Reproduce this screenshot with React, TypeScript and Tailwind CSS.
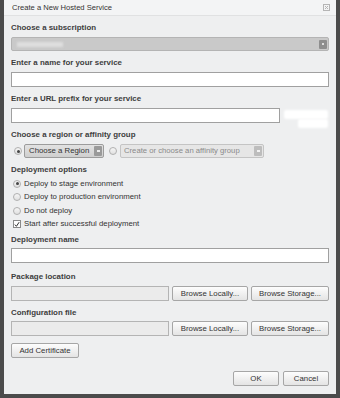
const FONT = { fontFamily: '"Liberation Sans", Arial, sans-serif' };

function Label({ children, className = '' }: { children: React.ReactNode; className?: string }) {
  return <div className={`h-[12px] leading-[12px] text-[7.9px] font-bold text-[#3d3d3d] ${className}`}>{children}</div>;
}

function Radio({ checked = false }: { checked?: boolean }) {
  return (
    <span className="w-[8px] h-[8px] rounded-full border border-[#b0b0b0] bg-gradient-to-b from-[#f6f6f6] to-[#e0e0e0] flex items-center justify-center shrink-0">
      {checked && <span className="w-[3px] h-[3px] rounded-full bg-[#444]" />}
    </span>
  );
}

function Checkbox() {
  return (
    <span className="w-[8px] h-[8px] border border-[#8a8a8a] bg-white flex items-center justify-center shrink-0">
      <svg width="7" height="7" viewBox="0 0 7 7">
        <path d="M1 3.6 L2.8 5.6 L6 0.8" fill="none" stroke="#222" strokeWidth="1.1" />
      </svg>
    </span>
  );
}

function Button({ children, className = '' }: { children: React.ReactNode; className?: string }) {
  return (
    <div className={`h-[15px] shrink-0 flex items-center justify-center rounded-[2px] border border-[#a6a6a6] bg-gradient-to-b from-[#fdfdfd] to-[#e4e4e4] text-[7.8px] text-[#333] ${className}`}>
      {children}
    </div>
  );
}

export default function App() {
  return (
    <div className="w-[340px] h-[398px] bg-[#4b4b4b] px-[4px] pb-[4px] overflow-hidden" style={FONT}>
      <div className="h-full bg-[#eeeff0] flex flex-col">
        {/* title bar */}
        <div className="h-[16px] bg-[#f3f4f5] border-b border-[#e0e1e2] flex items-center justify-between pl-[8px] pr-[6px]">
          <span className="text-[7.6px] text-[#333]">Create a New Hosted Service</span>
          <svg width="7" height="7" viewBox="0 0 7 7">
            <rect x="0.5" y="0.5" width="6" height="6" fill="none" stroke="#b5b5b5" />
            <path d="M2 2 L5 5 M5 2 L2 5" stroke="#b5b5b5" />
          </svg>
        </div>

        <div className="flex flex-col px-[7px]">
          <Label className="mt-[6px]">Choose a subscription</Label>
          <div className="mt-[3px] h-[14px] rounded-[2px] border border-[#b4b4b4] bg-[#c9c9c9] flex items-center justify-between pl-[5px] pr-[1px]">
            <span className="w-[46px] h-[5px] bg-[#dedede] blur-[1px]" />
            <span className="w-[8px] h-[9px] rounded-[1px] bg-[#8e8e8e] flex items-center justify-center">
              <span className="w-[2px] h-[2px] bg-white/70" />
            </span>
          </div>

          <Label className="mt-[6px]">Enter a name for your service</Label>
          <div className="mt-[3px] h-[15px] border border-[#a0a0a0] bg-white" />

          <Label className="mt-[6px]">Enter a URL prefix for your service</Label>
          <div className="mt-[3px] h-[15px] flex items-start">
            <div className="w-[269px] h-[15px] shrink-0 border border-[#a0a0a0] bg-white" />
            {/* blurred-out suffix */}
            <div className="ml-[4px] flex flex-col">
              <div className="mt-[2px] w-[44px] h-[9px] bg-white rounded-[2px] blur-[1px]" />
              <div className="ml-[14px] w-[30px] h-[9px] bg-white rounded-[2px] blur-[1px]" />
            </div>
          </div>

          <Label className="mt-[6px]">Choose a region or affinity group</Label>
          <div className="mt-[3px] h-[14px] flex items-center">
            <span className="ml-[3px]"><Radio checked /></span>
            <div className="ml-[2px] w-[80px] h-[14px] shrink-0 rounded-[2px] border border-[#9c9c9c] bg-gradient-to-b from-[#e2e2e2] to-[#cfcfcf] flex items-center justify-between pl-[4px] pr-[1px] py-[1px]">
              <span className="text-[7.8px] text-[#333]">Choose a Region</span>
              <span className="w-[8px] h-[10px] rounded-[1px] bg-[#9a9a9a] flex items-center justify-center">
                <span className="w-[3px] h-[2px] bg-white/80" />
              </span>
            </div>
            <span className="ml-[5px]"><Radio /></span>
            <div className="ml-[3px] w-[144px] h-[14px] shrink-0 rounded-[2px] border border-[#c4c4c4] bg-[#e6e6e6] flex items-center pl-[3px] pr-[1px] py-[1px]">
              <span className="flex-1 text-[7.7px] text-[#8a8a8a] whitespace-nowrap overflow-hidden">Create or choose an affinity group</span>
              <span className="w-[8px] h-[10px] shrink-0 rounded-[1px] bg-[#bdbdbd] flex items-center justify-center">
                <span className="w-[3px] h-[2px] bg-white/80" />
              </span>
            </div>
          </div>

          <Label className="mt-[6px]">Deployment options</Label>
          <div className="mt-[1px] flex flex-col text-[7.8px] text-[#333]">
            <div className="h-[13.5px] flex items-center gap-[3px] pl-[2px]"><Radio checked />Deploy to stage environment</div>
            <div className="h-[13.5px] flex items-center gap-[3px] pl-[2px]"><Radio />Deploy to production environment</div>
            <div className="h-[13.5px] flex items-center gap-[3px] pl-[2px]"><Radio />Do not deploy</div>
            <div className="h-[13.5px] flex items-center gap-[3px] pl-[2px]"><Checkbox />Start after successful deployment</div>
          </div>

          <Label className="mt-[3px]">Deployment name</Label>
          <div className="mt-[2px] h-[15px] border border-[#a0a0a0] bg-white" />

          <Label className="mt-[8px]">Package location</Label>
          <div className="mt-[3px] h-[15px] flex gap-[3px]">
            <div className="w-[158px] h-[15px] shrink-0 border border-[#b4b4b4] bg-[#ebebeb]" />
            <Button className="w-[76px]">Browse Locally...</Button>
            <Button className="w-[78px]">Browse Storage...</Button>
          </div>

          <Label className="mt-[6px]">Configuration file</Label>
          <div className="mt-[2px] h-[15px] flex gap-[3px]">
            <div className="w-[158px] h-[15px] shrink-0 border border-[#b4b4b4] bg-[#ebebeb]" />
            <Button className="w-[76px]">Browse Locally...</Button>
            <Button className="w-[78px]">Browse Storage...</Button>
          </div>

          <div className="mt-[7px] flex">
            <Button className="w-[68px]">Add Certificate</Button>
          </div>

          <div className="mt-[13px] flex justify-end gap-[4px]">
            <Button className="w-[46px]">OK</Button>
            <Button className="w-[46px]">Cancel</Button>
          </div>
        </div>
      </div>
    </div>
  );
}
